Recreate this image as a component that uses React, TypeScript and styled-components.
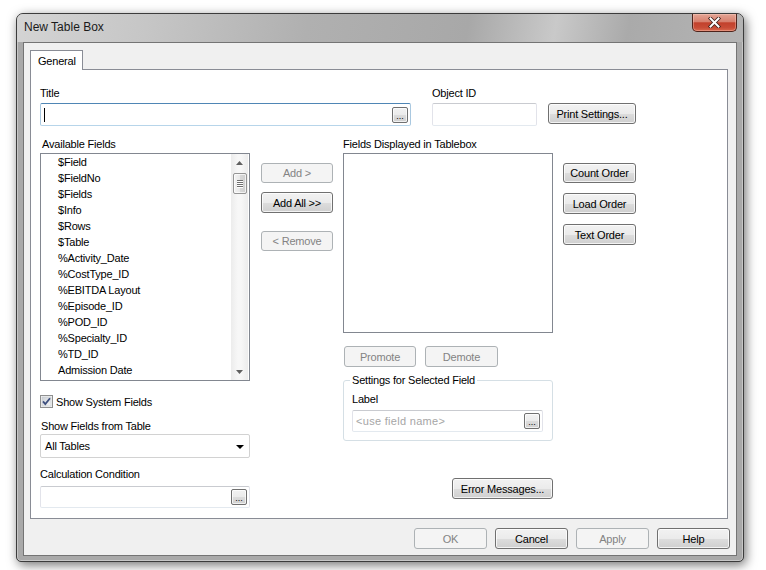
import React from 'react';
import styled, { createGlobalStyle } from 'styled-components';

const GlobalStyle = createGlobalStyle`
  html, body { margin: 0; padding: 0; background: #fff; }
  body {
    font-family: "Liberation Sans", Arial, sans-serif;
    font-size: 11px;
    letter-spacing: -0.2px;
    color: #000;
  }
  * { box-sizing: border-box; }
`;

const Page = styled.div`
  width: 766px;
  height: 570px;
  padding: 13px 0 0 16px;
`;

const Window = styled.div`
  width: 728px;
  height: 549px;
  border: 1px solid #3c3c3c;
  border-radius: 7px 7px 5px 5px;
  background: #a9a9a9;
  box-shadow: 2px 3px 11px rgba(0, 0, 0, 0.55), inset 0 0 0 1px rgba(255, 255, 255, 0.35);
  display: flex;
  flex-direction: column;
  overflow: hidden;
`;

const TitleBar = styled.div`
  height: 28px;
  flex: none;
  display: flex;
  align-items: flex-start;
  padding: 0 6px 0 7px;
  background: linear-gradient(100deg, #d4d4d4 0%, #c6c6c6 18%, #b0b0b0 40%, #a8a8a8 62%, #c9c9c9 74%, #aaaaaa 84%, #b4b4b4 100%);
`;

const TitleText = styled.div`
  font-size: 12px;
  letter-spacing: 0;
  line-height: 16px;
  padding-top: 5px;
  color: #1a1a1a;
`;

const CloseButton = styled.div`
  width: 45px;
  height: 18px;
  margin-left: auto;
  border: 1px solid #4e231b;
  border-top: none;
  border-radius: 0 0 5px 5px;
  background: linear-gradient(#e4a595 0%, #d7806e 45%, #c2412c 52%, #c84c36 80%, #d9684d 100%);
  box-shadow: inset 0 0 0 1px rgba(255, 220, 210, 0.35);
  display: flex;
  align-items: center;
  justify-content: center;
`;

const FrameBody = styled.div`
  flex: 1;
  display: flex;
  padding: 0 6px 5px 6px;
`;

const Client = styled.div`
  flex: 1;
  background: #f0f0f0;
  border: 1px solid #747474;
  display: flex;
  flex-direction: column;
  padding: 7px 8px 0 6px;
`;

const TabStrip = styled.div`
  display: flex;
  height: 19px;
  position: relative;
  z-index: 1;
`;

const Tab = styled.div`
  width: 53px;
  height: 20px;
  border: 1px solid #898c95;
  border-bottom: none;
  background: #fff;
  padding: 3px 0 0 7px;
  line-height: 14px;
`;

const TabPanel = styled.div`
  height: 450px;
  border: 1px solid #898c95;
  background: #fff;
  padding: 16px 0 0 9px;
`;

const Row = styled.div<{ $top?: number }>`
  display: flex;
  align-items: flex-start;
  margin-top: ${p => p.$top ?? 0}px;
`;

const Col = styled.div<{ $w: number; $left?: number; $padTop?: number }>`
  width: ${p => p.$w}px;
  margin-left: ${p => p.$left ?? 0}px;
  padding-top: ${p => p.$padTop ?? 0}px;
  display: flex;
  flex-direction: column;
  align-items: stretch;
`;

const Label = styled.div<{ $top?: number; $indent?: number; $bottom?: number }>`
  line-height: 14px;
  height: 14px;
  white-space: nowrap;
  margin-top: ${p => p.$top ?? 0}px;
  margin-bottom: ${p => p.$bottom ?? 0}px;
  padding-left: ${p => p.$indent ?? 0}px;
`;

const TextBox = styled.div<{ $h?: number; $focused?: boolean; $top?: number; $w?: number }>`
  height: ${p => p.$h ?? 23}px;
  width: ${p => (p.$w ? `${p.$w}px` : 'auto')};
  margin-top: ${p => p.$top ?? 0}px;
  background: #fff;
  border: 1px solid;
  border-radius: 2px;
  border-color: ${p =>
    p.$focused ? '#4f86b5 #a9c8e0 #b7d5ea #a9c8e0' : '#c9cbd0 #e2e3ea #e3e9ef #e2e3ea'};
  display: flex;
  align-items: center;
  padding: 0 2px 0 2px;
`;

const Caret = styled.span`
  width: 1px;
  height: 14px;
  background: #000;
  margin-left: 1px;
`;

const Placeholder = styled.span`
  color: #a6a6a6;
  padding-left: 1px;
  letter-spacing: 0.3px;
`;

const EllipsisButton = styled.div`
  width: 16px;
  height: 16px;
  margin-left: auto;
  border: 1px solid #707070;
  border-radius: 2px;
  background: linear-gradient(#f2f2f2 0%, #ebebeb 50%, #dddddd 51%, #cfcfcf 100%);
  box-shadow: inset 0 0 0 1px rgba(255, 255, 255, 0.7);
  font-size: 9px;
  line-height: 9px;
  text-align: center;
  letter-spacing: 0;
  padding-top: 4px;
`;

const Button = styled.button<{ $w: number; $h?: number; $top?: number; $left?: number }>`
  width: ${p => p.$w}px;
  height: ${p => p.$h ?? 21}px;
  margin-top: ${p => p.$top ?? 0}px;
  margin-left: ${p => p.$left ?? 0}px;
  flex: none;
  border: 1px solid #707070;
  border-radius: 3px;
  background: linear-gradient(#f2f2f2 0%, #ebebeb 50%, #dddddd 51%, #cfcfcf 100%);
  box-shadow: inset 0 0 0 1px rgba(255, 255, 255, 0.75);
  font: inherit;
  letter-spacing: inherit;
  color: #000;
  padding: 0;
  text-align: center;
  &:disabled {
    border-color: #adb2b5;
    background: #f4f4f4;
    color: #838383;
    box-shadow: none;
  }
`;

const ListBox = styled.div<{ $h: number; $top?: number }>`
  height: ${p => p.$h}px;
  margin-top: ${p => p.$top ?? 0}px;
  border: 1px solid #828790;
  background: #fff;
  display: flex;
  overflow: hidden;
`;

const Items = styled.div`
  flex: 1;
  padding-left: 17px;
`;

const Item = styled.div`
  height: 16px;
  line-height: 16px;
  white-space: nowrap;
`;

const ScrollBar = styled.div`
  width: 17px;
  flex: none;
  margin: 0 1px 0 0;
  background: linear-gradient(90deg, #ececec, #f7f7f7 40%, #f7f7f7 60%, #ececec);
  display: flex;
  flex-direction: column;
  align-items: center;
`;

const ArrowCell = styled.div`
  height: 17px;
  width: 17px;
  display: flex;
  align-items: center;
  justify-content: center;
`;

const Thumb = styled.div`
  width: 14px;
  height: 21px;
  margin-top: 2px;
  border: 1px solid #959595;
  border-radius: 2px;
  background: linear-gradient(90deg, #f3f3f3, #e8e8e8 50%, #d8d8d8 51%, #cfcfcf);
  box-shadow: inset 0 0 0 1px rgba(255, 255, 255, 0.7);
  display: flex;
  flex-direction: column;
  align-items: center;
  justify-content: center;
  gap: 1px;
`;

const Grip = styled.div`
  width: 6px;
  height: 1px;
  background: #6f6f6f;
  box-shadow: 0 1px 0 #fff;
`;

const Spacer = styled.div`
  flex: 1;
`;

const CheckRow = styled.div`
  display: flex;
  align-items: center;
  height: 13px;
  margin-top: 14px;
  gap: 3px;
`;

const Select = styled.div`
  height: 24px;
  margin-top: 1px;
  border: 1px solid #d2d2d2;
  border-radius: 2px;
  background: #fff;
  display: flex;
  align-items: center;
  padding: 0 5px 0 4px;
`;

const SelectArrow = styled.div`
  margin-left: auto;
  width: 0;
  height: 0;
  border-left: 4px solid transparent;
  border-right: 4px solid transparent;
  border-top: 4px solid #000;
  margin-top: 1px;
`;

const GroupBox = styled.fieldset`
  margin: 6px 0 0 0;
  padding: 0 9px 8px 8px;
  border: 1px solid #d5dfe5;
  border-radius: 3px;
  min-width: 0;
`;

const Legend = styled.legend`
  padding: 0 2px;
  margin-left: -2px;
  line-height: 14px;
`;

const FootRow = styled.div`
  display: flex;
  justify-content: flex-end;
  gap: 8px;
  margin: 9px -2px 0 0;
`;

const SideButton = styled(Button)`
  align-self: flex-end;
`;

const AVAILABLE = [
  '$Field',
  '$FieldNo',
  '$Fields',
  '$Info',
  '$Rows',
  '$Table',
  '%Activity_Date',
  '%CostType_ID',
  '%EBITDA Layout',
  '%Episode_ID',
  '%POD_ID',
  '%Specialty_ID',
  '%TD_ID',
  'Admission Date',
];

const CloseGlyph = () => (
  <svg width="13" height="11" viewBox="0 0 13 11">
    <path d="M2.5 1.5 L10.5 9.5 M10.5 1.5 L2.5 9.5" stroke="#3b1d17" strokeWidth="3.6" strokeLinecap="square" />
    <path d="M2.5 1.5 L10.5 9.5 M10.5 1.5 L2.5 9.5" stroke="#fff" strokeWidth="2" strokeLinecap="square" />
  </svg>
);

const Triangle = ({ up }: { up?: boolean }) => (
  <svg width="7" height="4" viewBox="0 0 7 4">
    <path d={up ? 'M0 4 L3.5 0 L7 4 Z' : 'M0 0 L7 0 L3.5 4 Z'} fill="#606060" />
  </svg>
);

const CheckBox = () => (
  <svg width="13" height="13" viewBox="0 0 13 13">
    <defs>
      <linearGradient id="cbg" x1="0" y1="0" x2="1" y2="1">
        <stop offset="0" stopColor="#cbcfd5" />
        <stop offset="1" stopColor="#f6f6f6" />
      </linearGradient>
    </defs>
    <rect x="0.5" y="0.5" width="12" height="12" fill="#f4f4f4" stroke="#8e8f8f" />
    <rect x="2" y="2" width="9" height="9" fill="url(#cbg)" stroke="#c4c8cc" strokeWidth="0.6" />
    <path d="M3 6.3 L5.3 9 L10 3.2" fill="none" stroke="#3d4f7e" strokeWidth="1.8" />
  </svg>
);

export default function App() {
  return (
    <Page>
      <GlobalStyle />
      <Window>
        <TitleBar>
          <TitleText>New Table Box</TitleText>
          <CloseButton>
            <CloseGlyph />
          </CloseButton>
        </TitleBar>
        <FrameBody>
          <Client>
            <TabStrip>
              <Tab>General</Tab>
            </TabStrip>
            <TabPanel>
              <Row style={{ alignItems: 'flex-end' }}>
                <Col $w={371}>
                  <Label $bottom={3}>Title</Label>
                  <TextBox $focused>
                    <Caret />
                    <EllipsisButton>...</EllipsisButton>
                  </TextBox>
                </Col>
                <Col $w={105} $left={21}>
                  <Label $bottom={3}>Object ID</Label>
                  <TextBox />
                </Col>
                <Button $w={88} $left={11} style={{ marginBottom: 2 }}>
                  Print Settings...
                </Button>
              </Row>

              <Row $top={11}>
                <Col $w={210}>
                  <Label $indent={2}>Available Fields</Label>
                  <ListBox $h={228} $top={2}>
                    <Items>
                      {AVAILABLE.map(name => (
                        <Item key={name}>{name}</Item>
                      ))}
                    </Items>
                    <ScrollBar>
                      <ArrowCell>
                        <Triangle up />
                      </ArrowCell>
                      <Thumb>
                        <Grip />
                        <Grip />
                        <Grip />
                        <Grip />
                      </Thumb>
                      <Spacer />
                      <ArrowCell>
                        <Triangle />
                      </ArrowCell>
                    </ScrollBar>
                  </ListBox>
                  <CheckRow>
                    <CheckBox />
                    <span>Show System Fields</span>
                  </CheckRow>
                  <Label $top={11} $indent={1}>Show Fields from Table</Label>
                  <Select>
                    All Tables
                    <SelectArrow />
                  </Select>
                  <Label $top={9}>Calculation Condition</Label>
                  <TextBox $h={22} $top={5}>
                    <EllipsisButton>...</EllipsisButton>
                  </TextBox>
                </Col>

                <Col $w={72} $left={11} $padTop={26}>
                  <Button $w={72} $h={20} disabled>
                    Add &gt;
                  </Button>
                  <Button $w={72} $top={9}>
                    Add All &gt;&gt;
                  </Button>
                  <Button $w={72} $h={20} $top={18} disabled>
                    &lt; Remove
                  </Button>
                </Col>

                <Col $w={210} $left={10}>
                  <Label>Fields Displayed in Tablebox</Label>
                  <ListBox $h={180} $top={2} />
                  <Row $top={13}>
                    <Button $w={72} $left={1} disabled>
                      Promote
                    </Button>
                    <Button $w={73} $left={9} disabled>
                      Demote
                    </Button>
                  </Row>
                  <GroupBox>
                    <Legend>Settings for Selected Field</Legend>
                    <Label $top={5}>Label</Label>
                    <TextBox $h={22} $top={4} $w={191}>
                      <Placeholder>&lt;use field name&gt;</Placeholder>
                      <EllipsisButton>...</EllipsisButton>
                    </TextBox>
                  </GroupBox>
                  <SideButton $w={101} $top={37}>
                    Error Messages...
                  </SideButton>
                </Col>

                <Col $w={73} $left={10} $padTop={26}>
                  <Button $w={73} $h={20}>
                    Count Order
                  </Button>
                  <Button $w={73} $top={10}>
                    Load Order
                  </Button>
                  <Button $w={73} $top={10}>
                    Text Order
                  </Button>
                </Col>
              </Row>
            </TabPanel>
            <FootRow>
              <Button $w={73} disabled>
                OK
              </Button>
              <Button $w={73}>Cancel</Button>
              <Button $w={73} disabled>
                Apply
              </Button>
              <Button $w={73}>Help</Button>
            </FootRow>
          </Client>
        </FrameBody>
      </Window>
    </Page>
  );
}
